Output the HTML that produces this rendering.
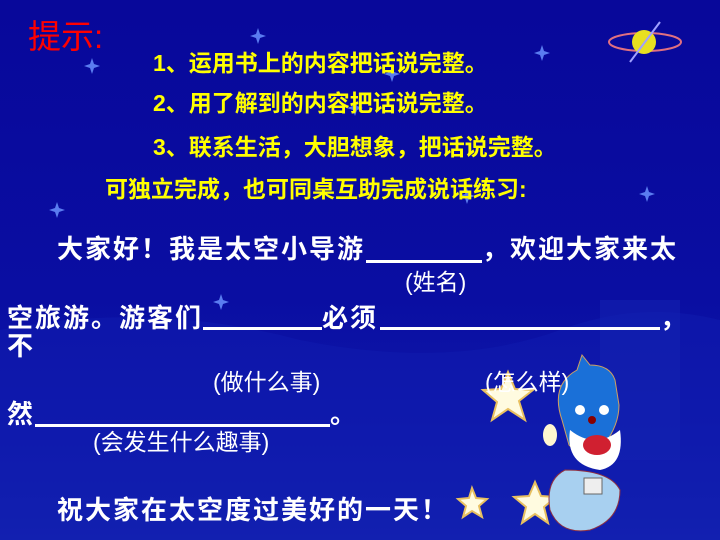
<!DOCTYPE html>
<html><head><meta charset="utf-8"><style>
body{margin:0}
#s{position:relative;width:720px;height:540px;overflow:hidden;background:linear-gradient(#08089a 0%,#0a0ea2 55%,#0e18aa 80%,#1424b0 100%);font-family:"Liberation Sans","Noto Sans CJK SC",sans-serif}
.t{position:absolute;white-space:nowrap;line-height:1}
.y{color:#ffff00;font-weight:bold;font-size:23px}
.w{color:#fff;font-size:26px;letter-spacing:2px;font-weight:bold}
.p{color:#fff;font-size:23px}
.u{position:absolute;height:3px;background:#fff}
</style></head><body><div id="s">
<svg width="720" height="540" style="position:absolute;left:0;top:0">
<path d="M0 330 Q150 300 300 340 Q450 370 560 330 Q640 300 720 320 L720 540 L0 540Z" fill="#0f1cb0" opacity=".5"/>
<rect x="600" y="300" width="80" height="160" fill="#1424b2" opacity=".5"/>
<g fill="#5a7cf0">
<path d="M258 28 l2 6 6 2 -6 2 -2 6 -2 -6 -6 -2 6 -2z"/>
<path d="M392 66 l2 6 6 2 -6 2 -2 6 -2 -6 -6 -2 6 -2z"/>
<path d="M467 188 l2 6 6 2 -6 2 -2 6 -2 -6 -6 -2 6 -2z"/>
<path d="M57 202 l2 6 6 2 -6 2 -2 6 -2 -6 -6 -2 6 -2z"/>
<path d="M542 45 l2 6 6 2 -6 2 -2 6 -2 -6 -6 -2 6 -2z"/>
<path d="M647 186 l2 6 6 2 -6 2 -2 6 -2 -6 -6 -2 6 -2z"/>
<path d="M221 294 l2 6 6 2 -6 2 -2 6 -2 -6 -6 -2 6 -2z"/>
<path d="M355 100 l2 6 6 2 -6 2 -2 6 -2 -6 -6 -2 6 -2z"/>
<path d="M92 58 l2 6 6 2 -6 2 -2 6 -2 -6 -6 -2 6 -2z"/>
</g>
<ellipse cx="645" cy="42" rx="36" ry="9" fill="none" stroke="#e07080" stroke-width="2"/>
<circle cx="644" cy="42" r="12" fill="#e8e020"/>
<line x1="630" y1="62" x2="660" y2="22" stroke="#a0a0ff" stroke-width="2"/>
<g fill="#fffbe0" stroke="#e8c060" stroke-width="2">
<path d="M508 372 l7 17 18 1 -14 11 6 19 -17 -11 -16 11 5 -18 -14 -12 18 -1z"/>
<path d="M472 488 l4 10 11 1 -8 7 3 11 -10 -6 -9 6 3 -11 -8 -7 11 -1z"/>
<path d="M535 482 l6 14 15 1 -12 10 4 16 -13 -9 -13 9 4 -16 -12 -10 15 -1z"/>
</g>
<ellipse cx="550" cy="435" rx="7" ry="11" fill="#fff6d0"/>
<g>
<path d="M562 420 q-12 -35 15 -50 l5 -15 8 10 q20 0 25 15 l4 25 q0 20 -15 40 q-20 15 -35 0z" fill="#1a70d8" stroke="#d0a060"/>
<path d="M570 430 q-5 35 30 40 q25 -5 20 -40 q-25 20 -50 0z" fill="#fff"/>
<ellipse cx="597" cy="445" rx="14" ry="10" fill="#d02030"/>
<path d="M565 470 q-20 10 -15 40 q10 25 40 20 q30 -10 30 -40 q-10 -20 -55 -20z" fill="#a8d0f0" stroke="#903040"/>
<rect x="584" y="478" width="18" height="16" fill="#eee" stroke="#666"/>
<circle cx="580" cy="410" r="5" fill="#fff"/><circle cx="604" cy="410" r="5" fill="#fff"/>
<circle cx="592" cy="420" r="4" fill="#800"/>
</g>
</svg>
<div class="t" style="left:28px;top:20px;color:#ff0000;font-size:33px">提示:</div>
<div class="t y" style="left:153px;top:52px">1、运用书上的内容把话说完整。</div>
<div class="t y" style="left:153px;top:92px">2、用了解到的内容把话说完整。</div>
<div class="t y" style="left:153px;top:136px">3、联系生活，大胆想象，把话说完整。</div>
<div class="t y" style="left:105px;top:178px">可独立完成，也可同桌互助完成说话练习:</div>
<div class="t w" style="left:57px;top:236px">大家好！我是太空小导游</div>
<div class="u" style="left:366px;top:260px;width:116px"></div>
<div class="t w" style="left:482px;top:236px">，欢迎大家来太</div>
<div class="t p" style="left:405px;top:271px">(姓名)</div>
<div class="t w" style="left:7px;top:305px">空旅游。游客们</div>
<div class="u" style="left:203px;top:327px;width:119px"></div>
<div class="t w" style="left:322px;top:305px">必须</div>
<div class="u" style="left:380px;top:327px;width:280px"></div>
<div class="t w" style="left:660px;top:305px">，</div>
<div class="t w" style="left:7px;top:333px">不</div>
<div class="t p" style="left:213px;top:371px">(做什么事)</div>
<div class="t p" style="left:485px;top:371px">(怎么样)</div>
<div class="t w" style="left:7px;top:401px">然</div>
<div class="u" style="left:35px;top:424px;width:295px"></div>
<div class="t w" style="left:330px;top:401px">。</div>
<div class="t p" style="left:93px;top:431px">(会发生什么趣事)</div>
<div class="t w" style="left:57px;top:497px">祝大家在太空度过美好的一天！</div>
</div></body></html>
